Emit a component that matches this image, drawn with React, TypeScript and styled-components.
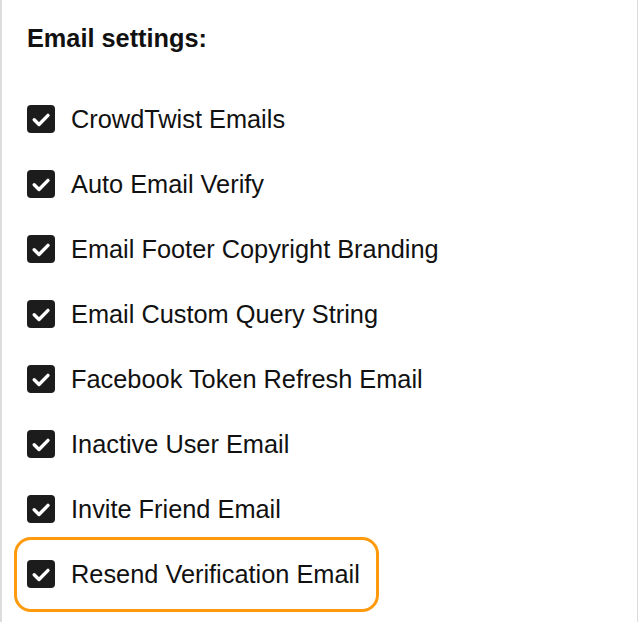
import React from "react";
import styled, { createGlobalStyle } from "styled-components";

const GlobalStyle = createGlobalStyle`
  html, body {
    margin: 0;
    padding: 0;
    background: #ffffff;
  }
  body {
    font-family: "Liberation Sans", Arial, Helvetica, sans-serif;
    color: #111111;
  }
`;

const Panel = styled.div`
  box-sizing: border-box;
  width: 638px;
  min-height: 622px;
  border-left: 2px solid #dcdcdc;
  border-right: 1px solid #dcdcdc;
  padding: 24px 0 0 25px;
  display: flex;
  flex-direction: column;
  gap: 52px;
`;

const Heading = styled.h2`
  margin: 0;
  font-size: 25.3px;
  font-weight: 700;
  line-height: 29px;
  color: #111111;
`;

const List = styled.div`
  display: flex;
  flex-direction: column;
  align-items: flex-start;
  gap: 37px;
`;

const Row = styled.label<{ $highlighted?: boolean }>`
  position: relative;
  display: flex;
  align-items: center;
  gap: 16px;
  height: 28px;
  font-size: 25.35px;
  line-height: 28px;
  color: #111111;

  &::after {
    content: "";
    display: ${(p) => (p.$highlighted ? "block" : "none")};
    position: absolute;
    top: -23px;
    bottom: -24px;
    left: -13px;
    right: -19px;
    border: 3px solid #ff9a0d;
    border-radius: 17px;
    pointer-events: none;
  }
`;

const Box = styled.span`
  flex: none;
  width: 28px;
  height: 28px;
  border-radius: 4px;
  background: #1c1c1c;
  display: flex;
  align-items: center;
  justify-content: center;
`;

const Check = () => (
  <Box>
    <svg width="28" height="28" viewBox="0 0 28 28" fill="none">
      <path
        d="M7.2 14.8 L12 19.5 L21 10.4"
        stroke="#ffffff"
        strokeWidth="3.4"
        strokeLinecap="round"
        strokeLinejoin="round"
      />
    </svg>
  </Box>
);

const items = [
  "CrowdTwist Emails",
  "Auto Email Verify",
  "Email Footer Copyright Branding",
  "Email Custom Query String",
  "Facebook Token Refresh Email",
  "Inactive User Email",
  "Invite Friend Email",
  "Resend Verification Email",
];

export default function App() {
  return (
    <>
      <GlobalStyle />
      <Panel>
        <Heading>Email settings:</Heading>
        <List>
          {items.map((label, i) => (
            <Row key={label} $highlighted={i === items.length - 1}>
              <Check />
              <span>{label}</span>
            </Row>
          ))}
        </List>
      </Panel>
    </>
  );
}
